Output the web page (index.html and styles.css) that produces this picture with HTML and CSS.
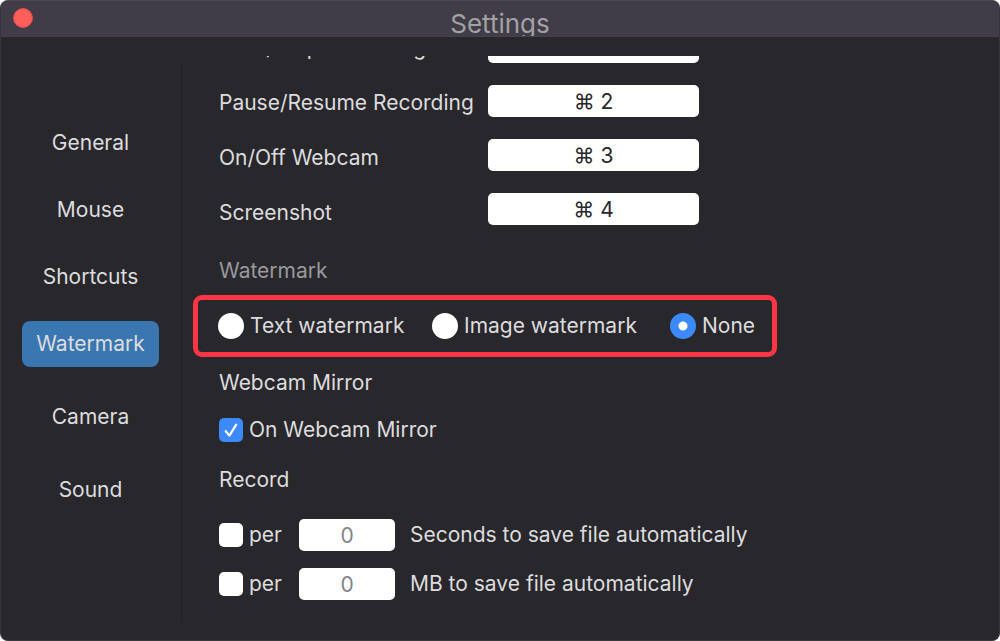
FILE: index.html
```html
<!DOCTYPE html>
<html lang="en">
<head>
<meta charset="utf-8">
<title>Settings</title>
<link rel="stylesheet" href="styles.css">
</head>
<body>
<div class="window">
  <header class="titlebar">
    <button class="close" type="button" aria-label="Close"></button>
    <h1 class="title">Settings</h1>
  </header>
  <div class="body">
    <nav class="sidebar">
      <div class="nav-group">
        <button class="nav-item" type="button">General</button>
        <button class="nav-item" type="button">Mouse</button>
        <button class="nav-item" type="button">Shortcuts</button>
        <button class="nav-item selected" type="button">Watermark</button>
      </div>
      <button class="nav-item" type="button">Camera</button>
      <button class="nav-item" type="button">Sound</button>
    </nav>
    <main class="content">
      <section class="shortcuts">
        <div class="shortcut-labels">
          <label for="s1">Start/Stop Recording</label>
          <label for="s2">Pause/Resume Recording</label>
          <label for="s3">On/Off Webcam</label>
          <label for="s4">Screenshot</label>
        </div>
        <div class="shortcut-fields">
          <input class="field" id="s1" type="text" value="⌘ 1">
          <input class="field" id="s2" type="text" value="⌘ 2">
          <input class="field" id="s3" type="text" value="⌘ 3">
          <input class="field" id="s4" type="text" value="⌘ 4">
        </div>
      </section>
      <h2 class="heading muted">Watermark</h2>
      <div class="watermark-options" role="radiogroup" aria-label="Watermark">
        <label class="option"><input class="radio" type="radio" name="wm">Text watermark</label>
        <label class="option"><input class="radio" type="radio" name="wm">Image watermark</label>
        <label class="option"><input class="radio" type="radio" name="wm" checked>None</label>
      </div>
      <h2 class="heading">Webcam Mirror</h2>
      <label class="option mirror">
        <span class="check">
          <input class="checkbox" type="checkbox" checked>
          <svg class="tick" viewBox="0 0 24 24" aria-hidden="true"><path d="M6.8 13.2l3.6 4.4L17.2 6.6"/></svg>
        </span>
        On Webcam Mirror
      </label>
      <h2 class="heading">Record</h2>
      <div class="record">
        <div class="record-row">
          <label class="option"><input class="checkbox" type="checkbox">per</label>
          <input class="field" id="sec" type="text" placeholder="0">
          <label for="sec">Seconds to save file automatically</label>
        </div>
        <div class="record-row">
          <label class="option"><input class="checkbox" type="checkbox">per</label>
          <input class="field" id="mb" type="text" placeholder="0">
          <label for="mb">MB to save file automatically</label>
        </div>
      </div>
    </main>
  </div>
</div>
</body>
</html>
```
FILE: styles.css
```css
* {
  box-sizing: border-box;
}

body {
  margin: 0;
  background: #fff;
  color: #dddcde;
  font: 21px/28px Inter, "Liberation Sans", sans-serif;
}

button,
input {
  margin: 0;
  font: inherit;
}

.window {
  display: flex;
  flex-direction: column;
  min-height: 100vh;
  overflow: hidden;
  background: #28272c;
  border: 1px solid #38363c;
  border-top-color: #4c4954;
  border-radius: 8px;
}

.titlebar {
  display: grid;
  grid-template-columns: 1fr auto 1fr;
  align-items: start;
  height: 36px;
  padding: 7px 12px 0;
  overflow: hidden;
  background: #403c48;
  border-bottom: 1px solid #454149;
}

.close {
  width: 20px;
  height: 20px;
  padding: 0;
  background: #ff5f5a;
  border: 1px solid #e04848;
  border-radius: 50%;
}

.title {
  margin: 0;
  color: #a3a1a3;
  font-size: 26px;
  font-weight: 400;
  line-height: 32px;
}

.body {
  display: grid;
  flex: 1;
  grid-template-columns: 181px 1fr;
  padding: 19px 0 18px;
}

.sidebar {
  display: flex;
  flex-direction: column;
  gap: 27px;
  margin-top: 8px;
  padding: 56px 22px 0 21px;
  border-right: 1px solid #212024;
}

.nav-group {
  display: flex;
  flex-direction: column;
  gap: 21px;
}

.nav-item {
  height: 46px;
  padding: 0;
  background: none;
  border: 0;
  border-radius: 8px;
  color: inherit;
}

.nav-item.selected {
  background: #3a76b0;
}

.content {
  padding-left: 37px;
  overflow: hidden;
}

/* The list is scrolled so that its first row is partly hidden. */
.shortcuts {
  display: grid;
  grid-template-columns: 269px 211px;
  margin-top: -36px;
}

.shortcut-labels {
  display: flex;
  flex-direction: column;
  line-height: 55px;
  white-space: nowrap;
}

.shortcut-fields {
  display: flex;
  flex-direction: column;
  gap: 22px;
  padding-top: 11px;
}

.field {
  width: 100%;
  height: 32px;
  padding: 0;
  background: #fff;
  border: 0;
  border-radius: 5px;
  color: #28272c;
  text-align: center;
}

.field::placeholder {
  color: #858489;
  opacity: 1;
}

.heading {
  margin: 0;
  font-size: inherit;
  font-weight: 400;
}

.muted {
  margin-top: 17px;
  color: #9a999c;
}

.watermark-options {
  display: grid;
  grid-template-columns: 214px 238px auto;
  align-items: center;
  width: 584px;
  height: 62px;
  margin: 10px 0 12px -26px;
  padding-left: 20px;
  border: 5px solid #ff3445;
  border-radius: 9px;
}

.option {
  display: flex;
  align-items: center;
  gap: 6px;
  white-space: nowrap;
}

.radio,
.checkbox {
  flex: none;
  appearance: none;
  background: #fff;
}

.radio {
  width: 26px;
  height: 26px;
  border-radius: 50%;
}

.radio:checked {
  background: radial-gradient(circle, #fff 4px, #3c8afa 5px);
}

.checkbox {
  display: block;
  width: 24px;
  height: 24px;
  border-radius: 5px;
}

.checkbox:checked {
  background: #3c8afa;
}

.check {
  display: grid;
}

.check > * {
  grid-area: 1 / 1;
}

.tick {
  width: 24px;
  height: 24px;
  fill: none;
  stroke: #fff;
  stroke-width: 2.2;
  stroke-linecap: round;
  stroke-linejoin: round;
  pointer-events: none;
}

.mirror {
  margin: 19px 0 22px;
}

.record {
  display: grid;
  gap: 17px;
  margin-top: 25px;
}

.record-row {
  display: grid;
  grid-template-columns: 80px 96px auto;
  align-items: center;
}

.record-row > :last-child {
  padding-left: 15px;
  white-space: nowrap;
}
```
